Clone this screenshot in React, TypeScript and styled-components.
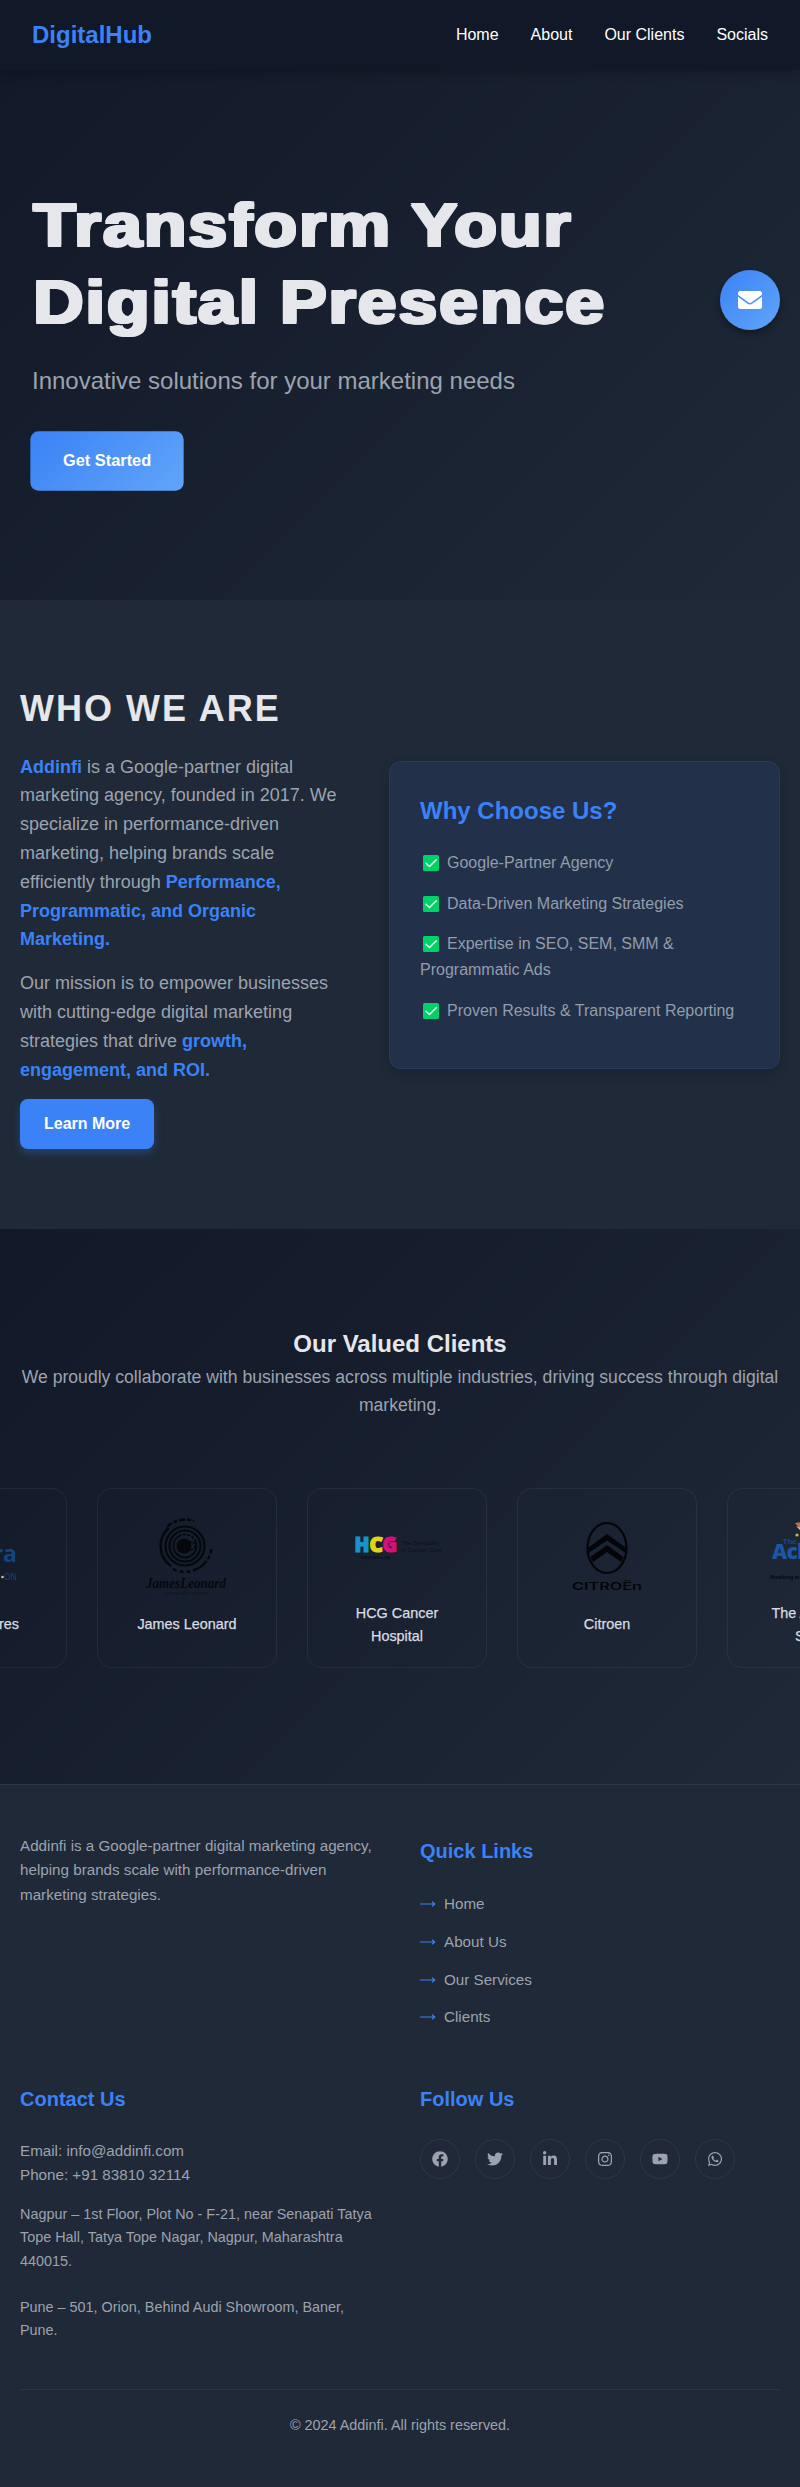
import React from 'react';
import styled, { createGlobalStyle } from 'styled-components';
import { FaEnvelope, FaFacebook, FaTwitter, FaLinkedinIn, FaInstagram, FaYoutube, FaWhatsapp } from 'react-icons/fa';

const Global = createGlobalStyle`
  * { margin: 0; padding: 0; box-sizing: border-box; }
  body { background: #111827; color: #e5e7eb; font-family: 'Liberation Sans', Arial, sans-serif; line-height: 1.6; overflow-x: hidden; }
  a { color: inherit; text-decoration: none; }
  ul { list-style: none; }
`;

const Header = styled.header`
  position: relative; z-index: 2; height: 70px; padding: 0 32px;
  display: flex; align-items: center; justify-content: space-between;
  background: #111827; box-shadow: 0 2px 10px rgba(0, 0, 0, 0.3);
`;
const Brand = styled.div`font-size: 24px; font-weight: 700; color: #3b82f6;`;
const Nav = styled.nav`display: flex; gap: 32px; font-size: 16px; color: #fff;`;

const Hero = styled.section`
  height: 600px; margin-top: -70px; padding: 186px 32px 0;
  background: linear-gradient(135deg, #111827, #1f2937);
`;
const HeroTitle = styled.h1`
  width: max-content; padding-left: 1px;
  font-size: 62px; line-height: 77px; font-weight: 900; letter-spacing: 1.6px; word-spacing: -1px;
  text-shadow: 1.5px 0.6px, -1.5px 0.6px, 1.5px -0.6px, -1.5px -0.6px, 0.7px 0.6px, -0.7px -0.6px;
  transform: scaleX(1.13); transform-origin: left;
`;
const HeroText = styled.p`margin: 22px 0 32px; font-size: 24px; line-height: 38px; color: #9ca3af;`;
const HeroButton = styled.a`
  display: inline-block; padding: 16px 32px; border-radius: 8px; font-weight: 700; color: #fff;
  background: linear-gradient(135deg, #3b82f6, #60a5fa); transform: scale(1.022);
`;
const MailButton = styled.a`
  position: fixed; top: 270px; right: 20px; width: 60px; height: 60px; border-radius: 50%; z-index: 3;
  display: flex; align-items: center; justify-content: center; font-size: 24px; color: #fff;
  background: linear-gradient(135deg, #3b82f6, #60a5fa); box-shadow: 0 4px 6px rgba(0, 0, 0, 0.3);
`;

const About = styled.section`
  display: grid; grid-template-columns: 329px 391px; gap: 40px; align-items: center;
  padding: 80px 20px; background: #1f2937;
`;
const AboutTitle = styled.h2`font-size: 36px; letter-spacing: 2px; margin-bottom: 15px;`;
const AboutText = styled.p`
  font-size: 18px; line-height: 28.8px; margin-bottom: 15px; color: #9ca3af;
  b { color: #3b82f6; }
`;
const LearnButton = styled.a`
  display: block; width: max-content; padding: 12px 24px; border-radius: 8px; color: #fff; font-weight: 700;
  background: #3b82f6; box-shadow: 0 4px 10px rgba(59, 130, 246, 0.3);
`;
const WhyCard = styled.div`
  margin-top: 1px; padding: 30px; border: 1px solid rgba(59, 130, 246, 0.12); border-radius: 12px;
  background: #22304a; box-shadow: 0 4px 12px rgba(0, 0, 0, 0.15);
`;
const WhyTitle = styled.h3`font-size: 24px; color: #3b82f6; margin-bottom: 20px;`;
const WhyItem = styled.li`
  margin-bottom: 15px; color: #949caa;
  svg { display: inline-block; vertical-align: -3px; margin: 0 8px 0 3px; }
`;

const Clients = styled.section`
  height: 555px; padding-top: 96px; text-align: center; overflow: hidden;
  background: linear-gradient(135deg, #111827, #1f2937);
`;
const ClientsTitle = styled.h2`font-size: 24px;`;
const ClientsText = styled.p`padding: 0 20px; font-size: 17.6px; color: #9ca3af;`;
const Track = styled.div`display: flex; gap: 30px; width: max-content; margin: 68px 0 0 -113px;`;
const ClientCard = styled.div`
  width: 180px; height: 180px; padding: 20px; border: 1px solid rgba(255, 255, 255, 0.06); border-radius: 15px;
  display: flex; flex-direction: column; align-items: center; justify-content: center;
  svg { display: block; width: 100px; height: 80px; margin-bottom: 14px; overflow: visible; }
`;
const ClientName = styled.div`font-size: 14.4px; line-height: 23px; color: #d9dce1; -webkit-text-stroke: 0.25px currentColor;`;

const Footer = styled.footer`
  height: 703px; padding: 49px 20px 0; border-top: 1px solid #2e3947; background: #1f2937; color: #9ca3af;
`;
const FooterGrid = styled.div`
  display: grid; grid-template-columns: 1fr 1fr; column-gap: 40px; grid-template-rows: 248px 307px;
  border-bottom: 1px solid #2b3645;
`;
const Blurb = styled.p`font-size: 15.2px; line-height: 24.4px;`;
const FooterTitle = styled.h3`font-size: 20px; line-height: 31px; color: #3b82f6; margin: 2px 0 24px;`;
const QuickLinks = styled.ul`padding-top: 1px;`;
const QuickLink = styled.li`
  display: flex; align-items: center; gap: 8px; height: 24.4px; margin-bottom: 13.4px; font-size: 15.2px;
  svg { color: #3b82f6; }
`;
const Address = styled.p`font-size: 14.4px; line-height: 23.4px; margin-top: 15px; & + & { margin-top: 23px; }`;
const Socials = styled.div`display: flex; gap: 15px;`;
const Social = styled.a`
  width: 40px; height: 40px; border: 1px solid #2d3848; border-radius: 50%; font-size: 16px;
  display: flex; align-items: center; justify-content: center;
`;
const Copyright = styled.p`margin-top: 24px; text-align: center; font-size: 14.4px;`;

const Check = () => (
  <svg width="16" height="16" viewBox="0 0 16 16">
    <rect width="16" height="16" rx="1.5" fill="#00d26a" />
    <path d="M3 8.2l3.5 3.3 6.8-6.8" fill="none" stroke="#e8fff2" strokeWidth="1.5" strokeLinecap="round" strokeLinejoin="round" />
  </svg>
);
const Arrow = () => (
  <svg width="16" height="8" viewBox="0 0 16 8" fill="none" stroke="currentColor" strokeWidth="1.1">
    <path d="M0 4h14.5M12 1.8L14.8 4 12 6.2" />
  </svg>
);

const HydraLogo = () => (
  <svg viewBox="0 0 100 80">
    <text x="90" y="43" textAnchor="end" fontSize="23" fontWeight="700" fill="#12457f" fontFamily="Open Sans, sans-serif">Hydra</text>
    <circle cx="75.5" cy="58" r="1.3" fill="#c9cf5a" />
    <text x="90" y="61" textAnchor="end" fontSize="8.5" fill="#12457f" fontFamily="Open Sans, sans-serif">ON</text>
  </svg>
);
const LeonardLogo = () => (
  <svg viewBox="0 0 100 80" fill="none" stroke="#05070d">
    <circle cx="47" cy="27" r="7.5" fill="#05070d" stroke="none" />
    <circle cx="54" cy="27" r="4" strokeWidth="1.5" strokeDasharray="3 1" />
    <circle cx="48" cy="27" r="11.5" strokeWidth="1.8" strokeDasharray="50 1.500 3 1.500 3 1.500 3 1.500" />
    <circle cx="48" cy="27" r="15.5" strokeWidth="2.2" />
    <circle cx="48" cy="27" r="19.5" strokeWidth="2.2" />
    <path d="M31.500 9A24.500 24.500 0 0 0 34 47" strokeWidth="2.400" />
    <path d="M30 8A26 26 0 0 1 57 2" strokeWidth="2.400" strokeDasharray="6 2 4 2" />
    <path d="M36 50A26 26 0 0 0 53 52.500" strokeWidth="2.400" strokeDasharray="4 3" />
    <path d="M56 51.500A26 26 0 0 0 74.500 30" strokeWidth="2.400" strokeDasharray="17 2 4 2" />
    <text x="49" y="69" textAnchor="middle" fontSize="14" fontStyle="italic" fontWeight="700" textLength="80" lengthAdjust="spacingAndGlyphs" fill="#05070d" stroke="none" fontFamily="Liberation Serif, serif">JamesLeonard</text>
    <text x="49" y="76" textAnchor="middle" fontSize="4" textLength="44" fill="#0b101a" stroke="none">BY THE BEST SUITING</text>
  </svg>
);
const HcgLogo = () => (
  <svg viewBox="0 0 100 80">
    <g fontFamily="Open Sans, sans-serif" fontWeight="800" fontSize="21" strokeWidth="1.200">
      <text x="7.500" y="43.500" textLength="15" lengthAdjust="spacingAndGlyphs" fill="#1594cf" stroke="#1594cf">H</text>
      <text x="22.500" y="43.500" textLength="13.500" lengthAdjust="spacingAndGlyphs" fill="#e3d21b" stroke="#e3d21b">C</text>
      <text x="35.500" y="43.500" textLength="14.500" lengthAdjust="spacingAndGlyphs" fill="#d3107c" stroke="#d3107c">G</text>
    </g>
    <g fill="#0a0e17" fontSize="5.800">
      <text x="54" y="37" textLength="38">The Specialist</text>
      <text x="54" y="44" textLength="41">in Cancer Care</text>
      <text x="13" y="50.500" fontSize="3.500" textLength="31">HEALTHCARE GLOBAL</text>
    </g>
  </svg>
);
const CitroenLogo = () => (
  <svg viewBox="0 0 100 80">
    <ellipse cx="50" cy="29" rx="19.500" ry="25" fill="none" stroke="#030509" strokeWidth="2.200" />
    <path d="M50 15L31.500 28.500v5.500L50 21.500 68.500 34v-5.500zM50 26L33.500 38l2.500 5L50 33l14 10 2.500-5z" fill="#030509" />
    <text x="50" y="71" textAnchor="middle" fontSize="9.800" fontWeight="600" textLength="70" lengthAdjust="spacingAndGlyphs" fill="#030509" fontFamily="Inter, sans-serif">CITROËn</text>
  </svg>
);
const AcademyLogo = () => (
  <svg viewBox="0 0 100 80">
    <path d="M28 15l6-1 3 5-4 2z" fill="#c0704a" />
    <path d="M29 18l6 6h4v-7l-3 4z" fill="#d9d5a0" />
    <circle cx="30" cy="27" r="1.600" fill="#b9c34b" />
    <text x="15.500" y="36" fontSize="8" fontWeight="700" fill="#164a8a">The</text>
    <text x="5" y="51" fontSize="21" fontWeight="800" fill="#1c57a5" fontFamily="Open Sans, sans-serif" letterSpacing="-.8">Achievers</text>
    <text x="3" y="71" fontSize="5" fontWeight="700" fill="#06080d">Breathing in Excellence</text>
  </svg>
);

const clients = [
  { name: 'Hydra Stores', Logo: HydraLogo },
  { name: 'James Leonard', Logo: LeonardLogo },
  { name: 'HCG Cancer Hospital', Logo: HcgLogo },
  { name: 'Citroen', Logo: CitroenLogo },
  { name: 'The Achievers School', Logo: AcademyLogo },
];
const reasons = ['Google-Partner Agency', 'Data-Driven Marketing Strategies', 'Expertise in SEO, SEM, SMM & Programmatic Ads', 'Proven Results & Transparent Reporting'];
const socials = [FaFacebook, FaTwitter, FaLinkedinIn, FaInstagram, FaYoutube, FaWhatsapp];

export default function App() {
  return (
    <>
      <Global />
      <Header>
        <Brand>DigitalHub</Brand>
        <Nav>{['Home', 'About', 'Our Clients', 'Socials'].map((t) => <a key={t} href="#">{t}</a>)}</Nav>
      </Header>
      <Hero>
        <HeroTitle>Transform Your<br />Digital Presence</HeroTitle>
        <HeroText>Innovative solutions for your marketing needs</HeroText>
        <HeroButton href="#">Get Started</HeroButton>
      </Hero>
      <MailButton href="#"><FaEnvelope /></MailButton>
      <About>
        <div>
          <AboutTitle>WHO WE ARE</AboutTitle>
          <AboutText><b>Addinfi</b> is a Google-partner digital marketing agency, founded in 2017. We specialize in performance-driven marketing, helping brands scale efficiently through <b>Performance, Programmatic, and Organic Marketing.</b></AboutText>
          <AboutText>Our mission is to empower businesses with cutting-edge digital marketing strategies that drive <b>growth, engagement, and ROI.</b></AboutText>
          <LearnButton href="#">Learn More</LearnButton>
        </div>
        <WhyCard>
          <WhyTitle>Why Choose Us?</WhyTitle>
          <ul>{reasons.map((r) => <WhyItem key={r}><Check />{r}</WhyItem>)}</ul>
        </WhyCard>
      </About>
      <Clients>
        <ClientsTitle>Our Valued Clients</ClientsTitle>
        <ClientsText>We proudly collaborate with businesses across multiple industries, driving success through digital marketing.</ClientsText>
        <Track>
          {clients.map(({ name, Logo }) => <ClientCard key={name}><Logo /><ClientName>{name}</ClientName></ClientCard>)}
        </Track>
      </Clients>
      <Footer>
        <FooterGrid>
          <Blurb>Addinfi is a Google-partner digital marketing agency, helping brands scale with performance-driven marketing strategies.</Blurb>
          <div>
            <FooterTitle>Quick Links</FooterTitle>
            <QuickLinks>{['Home', 'About Us', 'Our Services', 'Clients'].map((t) => <QuickLink key={t}><Arrow />{t}</QuickLink>)}</QuickLinks>
          </div>
          <div>
            <FooterTitle>Contact Us</FooterTitle>
            <Blurb>Email: info@addinfi.com<br />Phone: +91 83810 32114</Blurb>
            <Address>Nagpur – 1st Floor, Plot No - F-21, near Senapati Tatya Tope Hall, Tatya Tope Nagar, Nagpur, Maharashtra 440015.</Address>
            <Address>Pune – 501, Orion, Behind Audi Showroom, Baner, Pune.</Address>
          </div>
          <div>
            <FooterTitle>Follow Us</FooterTitle>
            <Socials>{socials.map((Icon, i) => <Social key={i} href="#"><Icon /></Social>)}</Socials>
          </div>
        </FooterGrid>
        <Copyright>© 2024 Addinfi. All rights reserved.</Copyright>
      </Footer>
    </>
  );
}
